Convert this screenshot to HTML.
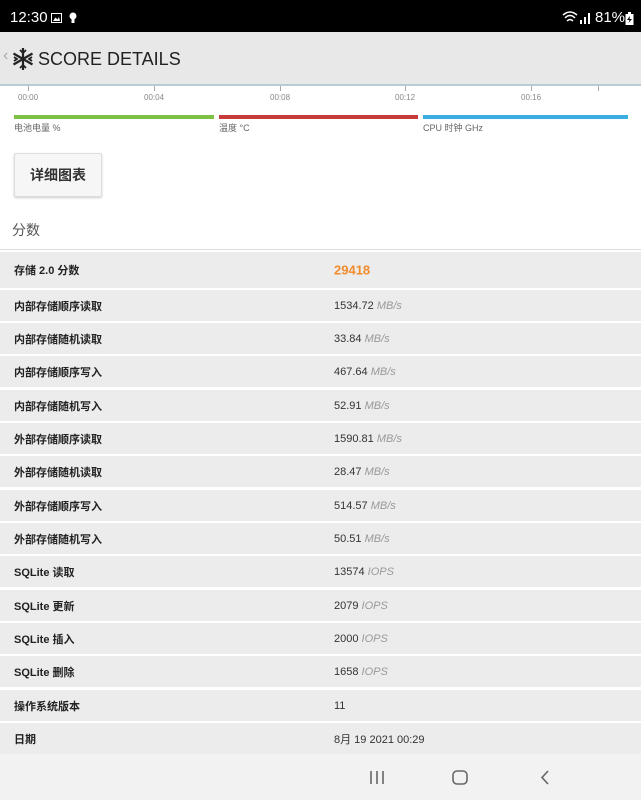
<!DOCTYPE html>
<html><head><meta charset="utf-8"><style>
*{margin:0;padding:0;box-sizing:border-box}
body{width:641px;height:800px;overflow:hidden;background:#fff;font-family:"Liberation Sans","Noto Sans CJK SC",sans-serif;position:relative;color:#222}
.abs{position:absolute}
#sb{left:0;top:0;width:641px;height:32px;background:#000;color:#fff}
#hd{left:0;top:32px;width:641px;height:52px;background:#e8e8e8}
.row{position:absolute;left:0;width:641px;background:#ececec;font-size:11px;font-weight:bold}
.row .l{position:absolute;left:14px;top:50%;transform:translateY(-50%)}
.row .v{position:absolute;left:334px;top:50%;transform:translateY(-50%);font-weight:normal;color:#333}
.row .v i{color:#999}
.tick{position:absolute;top:93px;font-size:8px;color:#888}
.tk{position:absolute;top:86px;width:1px;height:5px;background:#aaa}
</style></head><body>
<div id="sb" class="abs">
<span class="abs" style="left:10px;top:9px;font-size:15px">12:30</span>
<svg class="abs" style="left:51px;top:13px" width="11" height="10"><rect x="0.5" y="0.5" width="10" height="9" fill="none" stroke="#fff"/><path d="M2 8 L4.5 4.5 L6.5 6.5 L8 4 L9 8Z" fill="#fff"/></svg>
<svg class="abs" style="left:69px;top:12px" width="8" height="12"><circle cx="4" cy="4" r="3.5" fill="#fff"/><rect x="2.5" y="7" width="3" height="4" fill="#fff"/></svg>
<svg class="abs" style="left:562px;top:11px" width="16" height="12"><path d="M1 4 Q8 -2 15 4 M3 7 Q8 2 13 7 M5 10 Q8 7 11 10" stroke="#fff" stroke-width="1.5" fill="none"/></svg>
<svg class="abs" style="left:579px;top:12px" width="14" height="12"><rect x="1" y="8" width="2" height="4" fill="#fff"/><rect x="5" y="5" width="2" height="7" fill="#fff"/><rect x="9" y="1" width="2" height="11" fill="#fff"/></svg>
<span class="abs" style="left:595px;top:9px;font-size:15px">81%</span>
<svg class="abs" style="left:625px;top:12px" width="9" height="14"><rect x="0.5" y="2" width="8" height="11" fill="#fff"/><rect x="3" y="0" width="3" height="2" fill="#fff"/><path d="M5 4 L2 8 L4.5 8 L3.5 11 L7 7 L4.5 7Z" fill="#000"/></svg>
</div>
<div id="hd" class="abs">
<span class="abs" style="left:3px;top:15px;font-size:16px;color:#aaa">‹</span>
<svg class="abs" style="left:11px;top:15px" width="24" height="24" viewBox="-12 -12 24 24"><g stroke="#222" stroke-width="2.2" fill="none"><path d="M0 -11V11M-9.5 -5.5L9.5 5.5M-9.5 5.5L9.5 -5.5"/><path d="M-3 -9L0 -6L3 -9M-3 9L0 6L3 9M-9 -2L-6 0L-9 2M9 -2L6 0L9 2" stroke-width="1.8"/></g></svg>
<span class="abs" style="left:38px;top:17px;font-size:18px;color:#222">SCORE DETAILS</span>
</div>
<div class="abs" style="left:0;top:84px;width:641px;height:2px;background:#b8ccd6"></div>
<div class="tk" style="left:28px"></div><div class="tk" style="left:154px"></div><div class="tk" style="left:280px"></div><div class="tk" style="left:405px"></div><div class="tk" style="left:531px"></div><div class="tk" style="left:598px"></div>
<span class="tick" style="left:18px">00:00</span><span class="tick" style="left:144px">00:04</span><span class="tick" style="left:270px">00:08</span><span class="tick" style="left:395px">00:12</span><span class="tick" style="left:521px">00:16</span>
<div class="abs" style="left:14px;top:115px;width:200px;height:4px;background:#7cc142"></div>
<div class="abs" style="left:219px;top:115px;width:199px;height:4px;background:#c73a3a"></div>
<div class="abs" style="left:423px;top:115px;width:205px;height:4px;background:#3aaee0"></div>
<span class="abs" style="left:14px;top:121px;font-size:9px;color:#666">电池电量 %</span>
<span class="abs" style="left:219px;top:121px;font-size:9px;color:#666">温度 °C</span>
<span class="abs" style="left:423px;top:121px;font-size:9px;color:#666">CPU 时钟 GHz</span>
<div class="abs" style="left:14px;top:153px;width:88px;height:44px;background:#f6f6f6;border:1px solid #ddd;border-radius:2px;box-shadow:0 1px 2px #ccc;font-size:14px;font-weight:bold;text-align:center;line-height:42px;color:#333">详细图表</div>
<span class="abs" style="left:12px;top:220px;font-size:14px;color:#555">分数</span>
<div class="abs" style="left:0;top:249px;width:641px;height:1px;background:#ddd"></div>
<div class="row" style="top:252px;height:36px"><span class="l">存储 2.0 分数</span><span class="v" style="color:#f08c2b;font-weight:bold;font-size:13px">29418</span></div>
<div class="row" style="top:290px;height:31px"><span class="l">内部存储顺序读取</span><span class="v">1534.72 <i>MB/s</i></span></div>
<div class="row" style="top:323px;height:31px"><span class="l">内部存储随机读取</span><span class="v">33.84 <i>MB/s</i></span></div>
<div class="row" style="top:356px;height:31px"><span class="l">内部存储顺序写入</span><span class="v">467.64 <i>MB/s</i></span></div>
<div class="row" style="top:390px;height:31px"><span class="l">内部存储随机写入</span><span class="v">52.91 <i>MB/s</i></span></div>
<div class="row" style="top:423px;height:31px"><span class="l">外部存储顺序读取</span><span class="v">1590.81 <i>MB/s</i></span></div>
<div class="row" style="top:456px;height:31px"><span class="l">外部存储随机读取</span><span class="v">28.47 <i>MB/s</i></span></div>
<div class="row" style="top:490px;height:31px"><span class="l">外部存储顺序写入</span><span class="v">514.57 <i>MB/s</i></span></div>
<div class="row" style="top:523px;height:31px"><span class="l">外部存储随机写入</span><span class="v">50.51 <i>MB/s</i></span></div>
<div class="row" style="top:556px;height:31px"><span class="l">SQLite 读取</span><span class="v">13574 <i>IOPS</i></span></div>
<div class="row" style="top:590px;height:31px"><span class="l">SQLite 更新</span><span class="v">2079 <i>IOPS</i></span></div>
<div class="row" style="top:623px;height:31px"><span class="l">SQLite 插入</span><span class="v">2000 <i>IOPS</i></span></div>
<div class="row" style="top:656px;height:31px"><span class="l">SQLite 删除</span><span class="v">1658 <i>IOPS</i></span></div>
<div class="row" style="top:690px;height:31px"><span class="l">操作系统版本</span><span class="v">11</span></div>
<div class="row" style="top:723px;height:31px"><span class="l">日期</span><span class="v">8月 19 2021 00:29</span></div>
<div class="abs" style="left:0;top:754px;width:641px;height:46px;background:#f2f2f2">
<svg class="abs" style="left:368px;top:16px" width="18" height="15"><path d="M3 1V14 M9 1V14 M15 1V14" stroke="#666" stroke-width="1.6"/></svg>
<svg class="abs" style="left:451px;top:15px" width="18" height="17"><rect x="2" y="2" width="14" height="13" rx="4" fill="none" stroke="#666" stroke-width="1.6"/></svg>
<svg class="abs" style="left:538px;top:15px" width="14" height="17"><path d="M10 2L4 8.5L10 15" fill="none" stroke="#666" stroke-width="1.6"/></svg>
</div>
</body></html>
